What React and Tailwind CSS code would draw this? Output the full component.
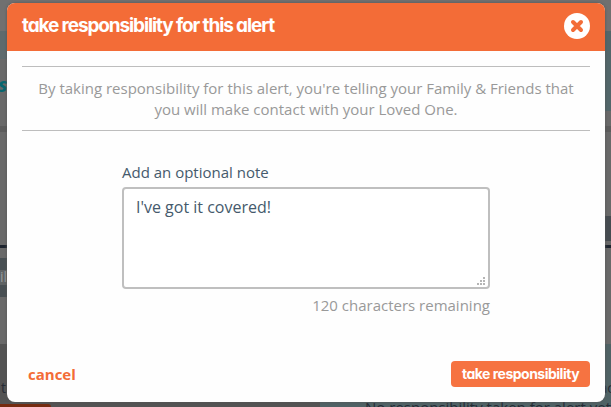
const BODY_FONT = "font-['Open_Sans','Noto_Sans',sans-serif]";
const DISPLAY_FONT = "font-['Inter',sans-serif] [font-feature-settings:'cv11']";

// ── PageBackdrop ──────────────────────────────────────────────────────────────
// Dimmed page that shows around the edges of the dialog.

function PageBackdrop() {
  return (
    <div className={`absolute inset-0 flex flex-col overflow-hidden bg-[#696969] text-sm ${BODY_FONT}`} aria-hidden="true">
      <div className="h-[31px] shrink-0 bg-[#707070]" />
      <div className="flex h-[95px] shrink-0 justify-between">
        <div className="w-[300px]">
          <div className="h-[28px] bg-[#5e6a6d]" />
          <div className="-ml-[2px] pt-[13px] text-xl leading-[26px] font-bold text-[#07666f] italic">s</div>
        </div>
        <div className="h-[80px] w-[300px] bg-[#52666a]" />
      </div>
      <div className="h-[6px] shrink-0 bg-[#5c5c5c]" />
      <div className="flex h-[113px] shrink-0 items-end justify-end pb-1">
        <div className="h-[25px] w-[300px] bg-[#454b50]" />
      </div>
      <div className="h-[3px] shrink-0 bg-[#1d242e]" />
      <div className="h-[96px] shrink-0 pt-[10px]">
        <div className="h-[39px] w-[300px] border-y-[12px] border-[#484f53] bg-[#5f6364] leading-[14px] text-[#979b9c]">il</div>
      </div>
      <div className="flex h-[63px] shrink-0">
        <div className="flex w-[322px] flex-col justify-between bg-[#535353] text-[#252b35]">
          <div className="pt-[34px] pl-px leading-5">t</div>
          <div className="h-[3px] w-[51px] rounded-tr bg-[#762b10]" />
        </div>
        <div className="flex flex-1 flex-col bg-[#4f6265] text-[#252b35]">
          <div className="-mr-[3px] pt-[34px] text-right leading-5">ac</div>
          <div className="-mt-px pl-[45px] text-[15px] leading-[20px] whitespace-nowrap">No responsibility taken for alert yet</div>
        </div>
      </div>
    </div>
  );
}

function CloseIcon() {
  return (
    <svg width="26" height="26" viewBox="0 0 26 26" className="block">
      <circle cx="13" cy="13" r="13" fill="#fff" />
      <path d="M9 9l8 8M17 9l-8 8" stroke="#f36c37" strokeWidth="4" strokeLinecap="round" />
    </svg>
  );
}

function ResizeGrip() {
  return (
    <svg width="8" height="8" viewBox="0 0 8 8" fill="#b5b5b5" shapeRendering="crispEdges">
      <path d="M6 0h2v2H6zM3 3h2v2H3zM6 3h2v2H6zM0 6h2v2H0zM3 6h2v2H3zM6 6h2v2H6z" />
    </svg>
  );
}

// ── NoteField ─────────────────────────────────────────────────────────────────

function NoteField() {
  return (
    <div className="mx-auto w-[368px]">
      <label htmlFor="note" className="block text-[15px] leading-5 text-[#455a6c]">
        Add an optional note
      </label>
      <div className="relative mt-[5px]">
        <textarea
          id="note"
          defaultValue="I've got it covered!"
          className="block h-[102px] w-full resize-none rounded border-2 border-[#bfbfbf] bg-white px-3 py-[7px] text-base leading-[22px] text-[#455a6c] outline-none"
        />
        <div className="absolute right-[5px] bottom-[4px]">
          <ResizeGrip />
        </div>
      </div>
      <p className="mt-[6px] text-right text-[15px] leading-5 text-[#999]">
        120 characters remaining
      </p>
    </div>
  );
}

export default function App() {
  return (
    <div className="relative h-[407px] w-[611px] overflow-hidden">
      <PageBackdrop />

      {/* ── Dialog ── */}
      <div className={`relative mt-[3px] ml-[7px] flex h-[399px] w-[598px] flex-col overflow-hidden rounded-lg bg-[#fefefe] shadow-[0_0_3px_#555] ${BODY_FONT}`}>
        <header className="flex h-12 shrink-0 items-center justify-between bg-[#f36c37] px-[15px]">
          <h2 className={`-mt-px text-[19px] font-bold tracking-[-1.12px] whitespace-nowrap text-white ${DISPLAY_FONT}`}>
            take responsibility for this alert
          </h2>
          <button type="button" aria-label="Close" className="-mt-[2px]">
            <CloseIcon />
          </button>
        </header>

        <p className="mx-[15px] mt-[15px] h-[65px] border-y border-[#bdbdbd] pt-[11px] text-center text-[15px] leading-[21px] text-[#999]">
          By taking responsibility for this alert, you're telling your Family &amp; Friends that
          <br />
          you will make contact with your Loved One.
        </p>

        <div className="mt-[31px]">
          <NoteField />
        </div>

        <footer className="mt-auto flex items-center justify-between pr-[15px] pb-[15px] pl-[21px]">
          <button type="button" className="pt-px text-[15px] font-bold text-[#f36c37]">
            cancel
          </button>
          <button
            type="button"
            className={`h-[26px] w-[139px] rounded bg-[#f67341] text-sm font-bold tracking-[-0.5px] whitespace-nowrap text-white ${DISPLAY_FONT}`}
          >
            take responsibility
          </button>
        </footer>
      </div>
    </div>
  );
}
